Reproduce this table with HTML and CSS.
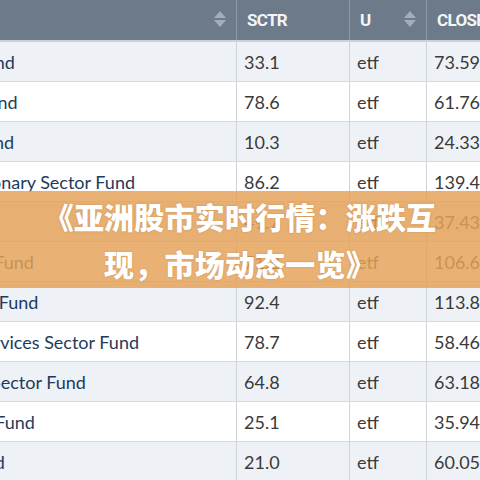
FILE: index.html
```html
<!DOCTYPE html>
<html lang="zh-CN">
<head>
  <meta charset="UTF-8">
  <title>亚洲股市实时行情</title>
  <link rel="stylesheet" href="styles.css">
</head>
<body>
  <div class="scroller">
    <table class="funds">
      <thead>
        <tr>
          <th class="name-col"><span class="sort"></span></th>
          <th class="sctr-col">SCTR</th>
          <th class="u-col">U<span class="sort"></span></th>
          <th class="close-col">CLOSE</th>
        </tr>
      </thead>
      <tbody>
        <tr><td class="name">Utilities Growth Fund</td><td>33.1</td><td>etf</td><td>73.59</td></tr>
        <tr><td class="name">Materials Sector Fund</td><td>78.6</td><td>etf</td><td>61.76</td></tr>
        <tr><td class="name">Financial Sector Fund</td><td>10.3</td><td>etf</td><td>24.33</td></tr>
        <tr><td class="name">Consumer Discretionary Sector Fund</td><td>86.2</td><td>etf</td><td>139.49</td></tr>
        <tr><td class="name">Real Estate Fund</td><td>49.7</td><td>etf</td><td>37.43</td></tr>
        <tr><td class="name">Technology Sector Fund</td><td>71.2</td><td>etf</td><td>106.64</td></tr>
        <tr><td class="name">Health Care Sector Fund</td><td>92.4</td><td>etf</td><td>113.86</td></tr>
        <tr><td class="name">Communication Services Sector Fund</td><td>78.7</td><td>etf</td><td>58.46</td></tr>
        <tr><td class="name">Consumer Staples Sector Fund</td><td>64.8</td><td>etf</td><td>63.18</td></tr>
        <tr><td class="name">Industrials Growth Fund</td><td>25.1</td><td>etf</td><td>35.94</td></tr>
        <tr><td class="name">Biotech Sector Fund</td><td>21.0</td><td>etf</td><td>60.05</td></tr>
      </tbody>
    </table>
  </div>

  <div class="banner">
    <h1>《亚洲股市实时行情：涨跌互<br>现，市场动态一览》</h1>
  </div>
</body>
</html>
```

FILE: styles.css
```css
body {
  margin: 0;
  font-family: Lato, "Noto Sans", sans-serif;
  background: #fff;
  overflow: hidden;
}

.scroller {
  width: 480px;
  height: 480px;
  overflow: hidden;
}

/* scrolled sideways, the first column is partly off screen */
.funds {
  margin-left: -163px;
  border-collapse: collapse;
  table-layout: fixed;
  width: 727px;
}

.funds th {
  height: 40px;
  padding: 0 0 0 10px;
  background-color: #6d7a89;
  color: #f3f5f7;
  font-family: Roboto, sans-serif;
  font-weight: bold;
  font-size: 17px;
  letter-spacing: -0.7px;
  text-align: left;
  border-right: 1px solid #8f9aa6;
  border-bottom: 2px solid #c9d2dc;
  position: relative;
}

.name-col { width: 389px; }
.sctr-col { width: 102px; }
.u-col { width: 66px; }
.close-col { width: 130px; }

.sort {
  position: absolute;
  right: 10px;
  top: 11px;
  width: 12px;
  height: 16px;
}

.sort::before,
.sort::after {
  content: "";
  position: absolute;
  left: 0;
  border-left: 6px solid transparent;
  border-right: 6px solid transparent;
}

.sort::before {
  top: 0;
  border-bottom: 7px solid #a4aeb9;
}

.sort::after {
  bottom: 0;
  border-top: 7px solid #a4aeb9;
}

.funds td {
  height: 39px;
  padding: 0 0 0 7px;
  font-size: 18px;
  color: #3a3a3a;
  border-right: 1px solid #cdd3d9;
  border-bottom: 1px solid #d3d9df;
  white-space: nowrap;
  overflow: hidden;
}

.funds td.name {
  color: #1f3b5c;
  padding-left: 8px;
}

.funds tbody tr:nth-child(odd) td {
  background-color: #eef2f6;
}

.banner {
  position: absolute;
  left: 0;
  top: 191px;
  width: 480px;
  height: 97px;
  background-color: rgba(229, 162, 88, 0.84);
  display: flex;
  align-items: center;
  justify-content: center;
}

.banner h1 {
  margin: 0;
  color: #fff;
  font-family: "Noto Sans CJK SC", sans-serif;
  font-weight: 900;
  font-size: 30px;
  line-height: 47px;
  text-align: center;
  letter-spacing: 0.2px;
  text-shadow: 0 0 2px rgba(150, 90, 30, 0.35);
}
```
